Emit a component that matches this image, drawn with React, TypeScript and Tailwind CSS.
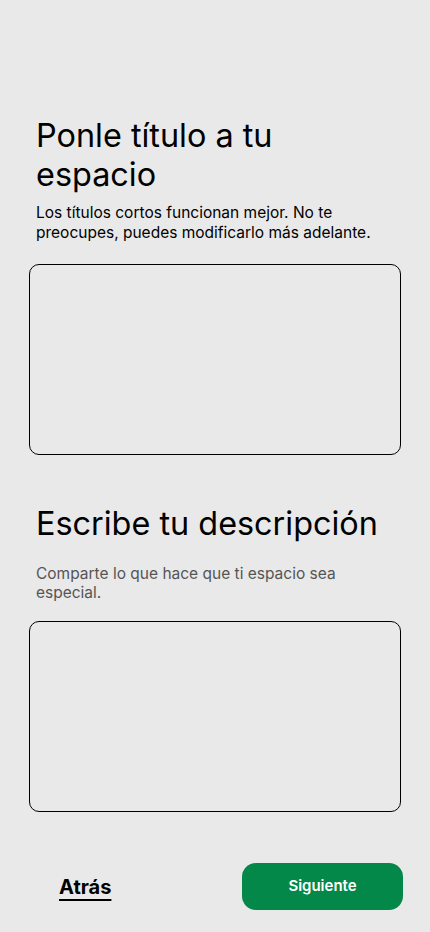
const App = () => {
  return (
    <div className="min-h-[932px] w-[430px] bg-[#e9e9e9] font-['Inter',sans-serif] text-black flex flex-col">
      {/* title */}
      <div className="pt-[117px] px-[36px]">
        <h1 className="text-[32.4px] leading-[38.5px] font-normal">
          Ponle título a tu
          <br />
          espacio
        </h1>
        <p className="mt-[9px] text-[15.5px] leading-[19.5px] pr-[20px]">
          Los títulos cortos funcionan mejor. No te preocupes, puedes
          modificarlo más adelante.
        </p>
      </div>

      <div className="mt-[22px] mx-[29px] h-[191px] border border-black rounded-[10px]" />

      {/* description */}
      <div className="mt-[50px] px-[36px]">
        <h2 className="text-[32.4px] leading-[38px] font-normal">
          Escribe tu descripción
        </h2>
        <p className="mt-[21px] text-[15.5px] leading-[19px] text-[#555555] pr-[40px]">
          Comparte lo que hace que ti espacio sea especial.
        </p>
      </div>

      <div className="mt-[19px] mx-[29px] h-[191px] border border-black rounded-[10px]" />

      {/* footer */}
      <div className="mt-[51px] flex items-center justify-between pl-[59px] pr-[27px]">
        <span className="text-[20px] font-bold underline underline-offset-[5px] decoration-2">
          Atrás
        </span>
        <button className="w-[161px] h-[47px] rounded-[14px] bg-[#038849] text-white text-[15px] font-semibold">
          Siguiente
        </button>
      </div>
    </div>
  );
};

export default App;
